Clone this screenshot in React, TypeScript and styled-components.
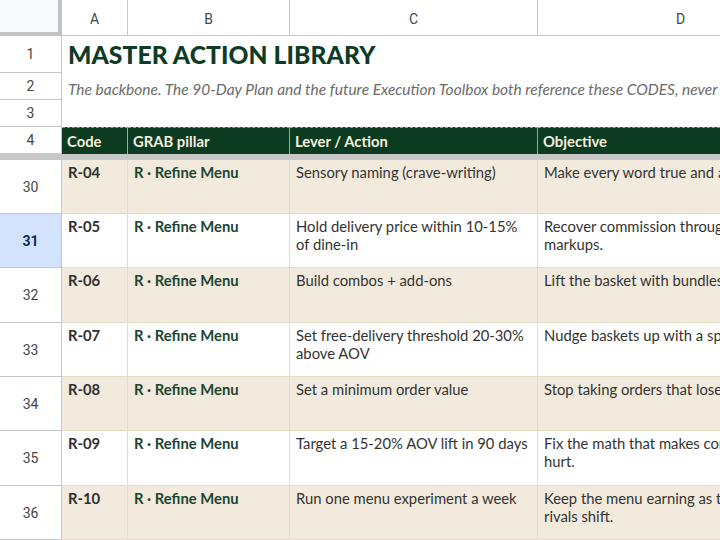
import React from 'react';
import styled, { createGlobalStyle } from 'styled-components';

const GlobalStyle = createGlobalStyle`
  html, body {
    margin: 0;
    padding: 0;
    background: #ffffff;
    overflow: hidden;
  }
`;

const COLS = '62px 66px 162px 248px 286px';

const Sheet = styled.div`
  width: 720px;
  height: 540px;
  overflow: hidden;
  background: #ffffff;
  font-family: Lato, 'Liberation Sans', sans-serif;
`;

const GridRow = styled.div<{ $h: number }>`
  display: grid;
  grid-template-columns: ${COLS};
  height: ${(p) => p.$h}px;
`;

const Corner = styled.div`
  background: #f8f9fa;
  border-right: 4px solid #c2c2c2;
  border-bottom: 4px solid #c2c2c2;
`;

const ColHead = styled.div`
  display: flex;
  align-items: center;
  justify-content: center;
  padding-top: 3px;
  border-right: 1px solid #c4c7c5;
  border-bottom: 1px solid #c4c7c5;
  color: #444746;
  font-family: Roboto, 'Liberation Sans', sans-serif;
  font-size: 14px;
`;

const RowHead = styled.div<{ $selected?: boolean }>`
  display: flex;
  align-items: center;
  justify-content: center;
  border-right: 1px solid #c4c7c5;
  border-bottom: 1px solid #c4c7c5;
  background: ${(p) => (p.$selected ? '#d3e3fd' : '#ffffff')};
  color: ${(p) => (p.$selected ? '#0b2a5c' : '#444746')};
  font-weight: ${(p) => (p.$selected ? 700 : 400)};
  font-family: Roboto, 'Liberation Sans', sans-serif;
  font-size: 14px;
`;

const SpanCell = styled.div`
  grid-column: 2 / -1;
  display: flex;
  align-items: flex-end;
  padding: 0 6px;
  white-space: nowrap;
  overflow: hidden;
`;

const Title = styled.div`
  font-size: 24.6px;
  font-weight: 900;
  color: #0c3b26;
  padding-bottom: 4px;
  letter-spacing: 0.1px;
`;

const Subtitle = styled.div`
  font-size: 15.5px;
  font-style: italic;
  color: #6b6b6b;
  padding-bottom: 2px;
`;

const HeadCell = styled.div`
  display: flex;
  align-items: center;
  padding: 0 5px;
  background: #0c3b22;
  color: #f4efdf;
  font-weight: 700;
  font-size: 14.8px;
  border-top: 1px dashed #8fa397;
  border-right: 1px solid #9aa89d;
  white-space: nowrap;
  overflow: hidden;
`;

const FreezeBar = styled.div`
  height: 6px;
  background: #c7c7c7;
`;

const DataCell = styled.div<{ $shade: boolean; $kind: 'code' | 'pillar' | 'text' }>`
  padding: 3px 6px 0 6px;
  background: ${(p) => (p.$shade ? '#f2ebdd' : '#ffffff')};
  border-right: 1px solid #e7dcc5;
  border-bottom: 1px solid #e7dcc5;
  font-size: 14.8px;
  line-height: 18px;
  font-weight: ${(p) => (p.$kind === 'text' ? 400 : 700)};
  color: ${(p) =>
    p.$kind === 'pillar' ? '#1c4632' : p.$kind === 'code' ? '#2f2f2f' : '#333333'};
  white-space: nowrap;
  overflow: hidden;
`;

const Line = styled.div``;

type Action = {
  row: number;
  h: number;
  code: string;
  lever: string[];
  objective: string[];
};

const actions: Action[] = [
  { row: 30, h: 54, code: 'R-04', lever: ['Sensory naming (crave-writing)'], objective: ['Make every word true and appetising.'] },
  { row: 31, h: 54, code: 'R-05', lever: ['Hold delivery price within 10-15%', 'of dine-in'], objective: ['Recover commission through capped', 'markups.'] },
  { row: 32, h: 55, code: 'R-06', lever: ['Build combos + add-ons'], objective: ['Lift the basket with bundles.'] },
  { row: 33, h: 54, code: 'R-07', lever: ['Set free-delivery threshold 20-30%', 'above AOV'], objective: ['Nudge baskets up with a spend goal.'] },
  { row: 34, h: 54, code: 'R-08', lever: ['Set a minimum order value'], objective: ['Stop taking orders that lose money.'] },
  { row: 35, h: 55, code: 'R-09', lever: ['Target a 15-20% AOV lift in 90 days'], objective: ['Fix the math that makes commissions', 'hurt.'] },
  { row: 36, h: 54, code: 'R-10', lever: ['Run one menu experiment a week'], objective: ['Keep the menu earning as tastes and', 'rivals shift.'] },
];

const Lines = ({ lines }: { lines: string[] }) => (
  <>
    {lines.map((l, i) => (
      <Line key={i}>{l}</Line>
    ))}
  </>
);

export default function App() {
  return (
    <Sheet>
      <GlobalStyle />
      <GridRow $h={36}>
        <Corner />
        <ColHead>A</ColHead>
        <ColHead>B</ColHead>
        <ColHead>C</ColHead>
        <ColHead>D</ColHead>
      </GridRow>
      <GridRow $h={37}>
        <RowHead>1</RowHead>
        <SpanCell>
          <Title>MASTER ACTION LIBRARY</Title>
        </SpanCell>
      </GridRow>
      <GridRow $h={27}>
        <RowHead>2</RowHead>
        <SpanCell>
          <Subtitle>
            The backbone. The 90-Day Plan and the future Execution Toolbox both reference these CODES, never the wording.
          </Subtitle>
        </SpanCell>
      </GridRow>
      <GridRow $h={27}>
        <RowHead>3</RowHead>
        <SpanCell />
      </GridRow>
      <GridRow $h={27}>
        <RowHead>4</RowHead>
        <HeadCell>Code</HeadCell>
        <HeadCell>GRAB pillar</HeadCell>
        <HeadCell>Lever / Action</HeadCell>
        <HeadCell>Objective</HeadCell>
      </GridRow>
      <FreezeBar />
      {actions.map((a, i) => {
        const shade = i % 2 === 0;
        return (
          <GridRow key={a.row} $h={a.h}>
            <RowHead $selected={a.row === 31}>{a.row}</RowHead>
            <DataCell $shade={shade} $kind="code">{a.code}</DataCell>
            <DataCell $shade={shade} $kind="pillar">R · Refine Menu</DataCell>
            <DataCell $shade={shade} $kind="text">
              <Lines lines={a.lever} />
            </DataCell>
            <DataCell $shade={shade} $kind="text">
              <Lines lines={a.objective} />
            </DataCell>
          </GridRow>
        );
      })}
    </Sheet>
  );
}
